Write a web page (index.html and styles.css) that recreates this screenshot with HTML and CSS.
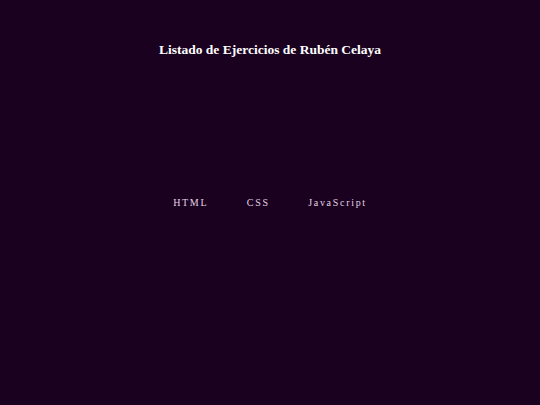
FILE: index.html
```html
<!DOCTYPE html>
<html lang="es">
<head>
<meta charset="utf-8">
<title>Listado de Ejercicios</title>
<link rel="stylesheet" href="styles.css">
</head>
<body>
<header class="header">
  <h1 class="title">Listado de Ejercicios de Rubén Celaya</h1>
</header>
<nav class="nav">
  <a class="nav-link" href="#">HTML</a>
  <a class="nav-link" href="#">CSS</a>
  <a class="nav-link" href="#">JavaScript</a>
</nav>
</body>
</html>
```
FILE: styles.css
```css
html, body {
  margin: 0;
  padding: 0;
}
body {
  background: #1b0120;
  width: 540px;
  height: 405px;
  font-family: "Liberation Serif", "Times New Roman", serif;
  overflow: hidden;
}
.header {
  padding-top: 42px;
  text-align: center;
}
.title {
  margin: 0;
  font-size: 13.5px;
  font-weight: bold;
  color: #ffffff;
  line-height: 16px;
}
.nav {
  display: flex;
  justify-content: center;
  gap: 38.5px;
  margin-top: 139px;
}
.nav-link {
  color: #e3d3e3;
  text-decoration: none;
  font-size: 10px;
  letter-spacing: 1.7px;
  line-height: 12px;
}
```
